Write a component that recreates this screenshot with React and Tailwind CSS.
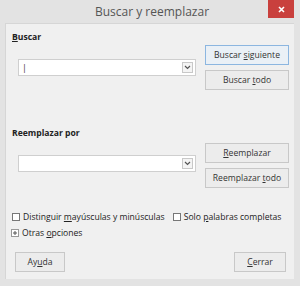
import React from "react";

const font = { fontFamily: '"Open Sans", "Noto Sans", sans-serif' };

function U({ children }) {
  return <span className="underline underline-offset-1">{children}</span>;
}

function Btn({ children, focused, className = "" }) {
  return (
    <div
      className={
        "flex items-center justify-center h-[20px] border text-[8.6px] text-[#333] " +
        (focused ? "border-[#8cb6e0] bg-[#eaf0f6] " : "border-[#c8c8c8] bg-[#ececec] ") +
        className
      }
    >
      {children}
    </div>
  );
}

function Combo({ children }) {
  return (
    <div className="flex items-center w-[178px] h-[17px] border border-[#cfcfcf] bg-white">
      <div className="flex-1 pl-[3px] text-[9px] text-[#333] leading-none">{children}</div>
      <div className="flex items-center justify-center w-[11px] h-[11px] mr-[2px] border border-[#c8c8c8] bg-[#f4f4f4]">
        <svg width="7" height="5" viewBox="0 0 7 5">
          <path d="M1 1 L3.5 3.5 L6 1" fill="none" stroke="#555" strokeWidth="1.2" />
        </svg>
      </div>
    </div>
  );
}

function Check({ children }) {
  return (
    <div className="flex items-center gap-[3px]">
      <div className="w-[8px] h-[8px] border border-[#777] bg-white" />
      <span>{children}</span>
    </div>
  );
}

export default function App() {
  return (
    <div className="w-[300px] h-[286px] bg-[#e3e3e3] flex flex-col" style={font}>
      <div className="relative h-[23px] flex items-center justify-center">
        <span className="text-[12px] text-[#555] pl-[4px]">Buscar y reemplazar</span>
        <div className="absolute right-[6px] top-0 w-[26px] h-[18px] bg-[#c9403d] flex items-center justify-center">
          <svg width="7" height="7" viewBox="0 0 7 7">
            <path d="M1 1 L6 6 M6 1 L1 6" stroke="#fff" strokeWidth="1.6" />
          </svg>
        </div>
      </div>
      <div className="ml-[5px] mr-[6px] h-[256px] bg-[#f0f0f0] border-t border-l border-[#d6d6d6] text-[8.6px] text-[#222] flex flex-col">
        <div className="pl-[6px] pt-[7px] h-[19px] leading-[12px] font-bold">
          <U>B</U>uscar
        </div>
        <div className="flex mt-[2px]">
          <div className="ml-[12px] mt-[14px]">
            <Combo>|</Combo>
          </div>
          <div className="ml-[9px] flex flex-col gap-[5px] w-[84px]">
            <Btn focused>Buscar&nbsp;<U>s</U>iguiente</Btn>
            <Btn>Buscar&nbsp;<U>t</U>odo</Btn>
          </div>
        </div>
        <div className="pl-[6px] mt-[37px] h-[12px] leading-[12px] font-bold">Reemplazar por</div>
        <div className="flex mt-[4px]">
          <div className="ml-[12px] mt-[12px]">
            <Combo />
          </div>
          <div className="ml-[9px] flex flex-col gap-[5px] w-[84px]">
            <Btn><U>R</U>eemplazar</Btn>
            <Btn>Reemplazar&nbsp;<U>t</U>odo</Btn>
          </div>
        </div>
        <div className="flex items-center gap-[8px] pl-[6px] mt-[23px] h-[12px] leading-[12px]">
          <Check>
            Distinguir <U>m</U>ayúsculas y minúsculas
          </Check>
          <Check>
            Solo <U>p</U>alabras completas
          </Check>
        </div>
        <div className="flex items-center gap-[3px] pl-[5px] mt-[4px] h-[12px] leading-[12px]">
          <div className="w-[8px] h-[8px] border border-[#999] bg-white flex items-center justify-center">
            <svg width="6" height="6" viewBox="0 0 6 6">
              <path d="M3 1 V5 M1 3 H5" stroke="#555" strokeWidth="1" />
            </svg>
          </div>
          <span>
            Otras <U>o</U>pciones
          </span>
        </div>
        <div className="flex justify-between mt-[13px] pl-[9px] pr-[8px]">
          <Btn className="w-[50px]">
            Ay<U>u</U>da
          </Btn>
          <Btn className="w-[52px]">
            <U>C</U>errar
          </Btn>
        </div>
      </div>
    </div>
  );
}
